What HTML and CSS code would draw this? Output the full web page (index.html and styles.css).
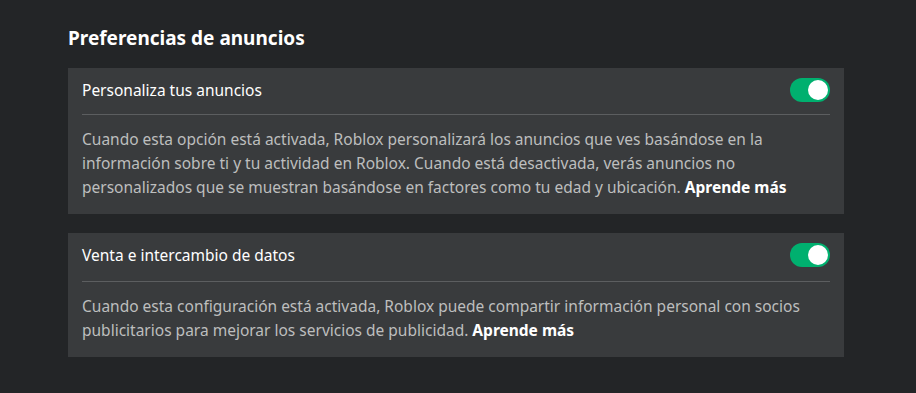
FILE: index.html
```html
<!DOCTYPE html>
<html lang="es">
<head>
<meta charset="utf-8">
<title>Preferencias de anuncios</title>
<link rel="stylesheet" href="styles.css">
</head>
<body>
<main class="page">
  <h2 class="title">Preferencias de anuncios</h2>
  <section class="card">
    <div class="card-head">
      <span class="card-title">Personaliza tus anuncios</span>
      <span class="toggle on"><span class="knob"></span></span>
    </div>
    <p class="card-body">Cuando esta opción está activada, Roblox personalizará los anuncios que ves basándose en la información sobre ti y tu actividad en Roblox. Cuando está desactivada, verás anuncios no personalizados que se muestran basándose en factores como tu edad y ubicación. <a class="link" href="#">Aprende más</a></p>
  </section>
  <section class="card card-alt">
    <div class="card-head">
      <span class="card-title">Venta e intercambio de datos</span>
      <span class="toggle on"><span class="knob"></span></span>
    </div>
    <p class="card-body">Cuando esta configuración está activada, Roblox puede compartir información personal con socios publicitarios para mejorar los servicios de publicidad. <a class="link" href="#">Aprende más</a></p>
  </section>
</main>
</body>
</html>
```

FILE: styles.css
```css
html, body {
  margin: 0;
  padding: 0;
  background: #232527;
  height: 100%;
}
body {
  font-family: "Noto Sans", "Open Sans", sans-serif;
  color: #fff;
}
.page {
  width: 776px;
  margin-left: 68px;
  padding-top: 26px;
  display: flex;
  flex-direction: column;
  gap: 19px;
}
.title {
  margin: 0 0 -1px 0;
  font-size: 19px;
  font-weight: 700;
  line-height: 24px;
  color: #fff;
}
.card {
  background: #393b3d;
  padding: 0 14px;
}
.card-head {
  display: flex;
  align-items: center;
  justify-content: space-between;
  padding: 10px 0 12px;
  border-bottom: 1px solid #5c5e60;
}
.card-alt .card-head {
  padding-bottom: 14px;
}
.card-title {
  font-size: 15.5px;
  line-height: 24px;
  color: #fff;
}
.toggle {
  width: 40px;
  height: 24px;
  border-radius: 12px;
  background: #00b06f;
  display: flex;
  align-items: center;
  justify-content: flex-end;
  padding: 0 2px;
  box-sizing: border-box;
}
.knob {
  width: 20px;
  height: 20px;
  border-radius: 50%;
  background: #fff;
}
.card-body {
  margin: 0;
  padding: 12px 0 15px;
  font-size: 15.5px;
  line-height: 24px;
  color: #bdbebe;
}
.link {
  color: #fff;
  font-weight: 700;
  text-decoration: none;
}
```
